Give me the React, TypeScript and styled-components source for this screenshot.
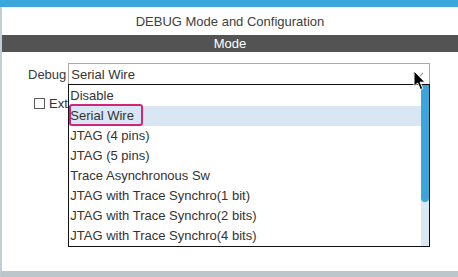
import React, { FC } from 'react';
import styled, { createGlobalStyle } from 'styled-components';

const options: string[] = [
  'Disable',
  'Serial Wire',
  'JTAG (4 pins)',
  'JTAG (5 pins)',
  'Trace Asynchronous Sw',
  'JTAG with Trace Synchro(1 bit)',
  'JTAG with Trace Synchro(2 bits)',
  'JTAG with Trace Synchro(4 bits)',
];

const selected = 'Serial Wire';

const App: FC = () => {
  return (
    <Page>
      <GlobalStyle />
      <TopBar />
      <Frame>
        <Panel>
          <Title>DEBUG Mode and Configuration</Title>
          <SectionBar>Mode</SectionBar>
          <Form>
            <Row>
              <Label>Debug</Label>
              <SelectWrap>
                <SelectBox>
                  {selected}
                  <Chevron width="14" height="10" viewBox="0 0 14 10">
                    <polyline points="1,2 6,7 11,2" fill="none" stroke="#a0a0a0" strokeWidth="1.2" />
                  </Chevron>
                </SelectBox>
                <Dropdown>
                  <List>
                    {options.map((option, index) => (
                      <Item key={index} $active={option === selected}>
                        {option}
                        {option === selected && <Marker />}
                      </Item>
                    ))}
                  </List>
                  <Track>
                    <Thumb />
                  </Track>
                </Dropdown>
                <Cursor width="14" height="21" viewBox="0 0 14 21">
                  <path
                    d="M1 1 L1 16.5 L4.6 13 L7.4 19.6 L9.8 18.6 L7.1 12.2 L12 12.2 Z"
                    fill="#000"
                    stroke="#fff"
                    strokeWidth="1"
                    strokeLinejoin="round"
                  />
                </Cursor>
              </SelectWrap>
            </Row>
            <CheckRow>
              <Check />
              <span>Ext</span>
            </CheckRow>
          </Form>
        </Panel>
      </Frame>
    </Page>
  );
};

export default App;

const GlobalStyle = createGlobalStyle`
  html, body {
    margin: 0;
    padding: 0;
    background: #fff;
  }
  body {
    font-family: "Liberation Sans", Arial, sans-serif;
    font-size: 13px;
    color: #333;
  }
`;

const Page = styled.div`
  width: 458px;
  height: 277px;
  display: flex;
  flex-direction: column;
  overflow: hidden;
`;

const TopBar = styled.div`
  height: 7px;
  background: #3aa7dc;
`;

const Frame = styled.div`
  flex: 1;
  display: flex;
  border-left: 2px solid #c2cdd4;
  border-bottom: 6px solid #bcc6cb;
`;

const Panel = styled.div`
  flex: 1;
  display: flex;
  flex-direction: column;
  background: #fff;
`;

const Title = styled.div`
  height: 28px;
  display: flex;
  align-items: center;
  justify-content: center;
  color: #404040;
`;

const SectionBar = styled.div`
  height: 17px;
  line-height: 17px;
  text-align: center;
  background: #535353;
  color: #fff;
`;

const Form = styled.div`
  padding: 11px 0 0 26px;
  display: flex;
  flex-direction: column;
  gap: 11px;
`;

const Row = styled.div`
  display: flex;
  align-items: center;
  gap: 2px;
`;

const Label = styled.span`
  color: #3a3a3a;
`;

const SelectWrap = styled.div`
  position: relative;
  width: 362px;
  height: 22px;
`;

const SelectBox = styled.div`
  box-sizing: border-box;
  height: 22px;
  border: 1px solid #a9a9a9;
  padding-left: 2px;
  display: flex;
  align-items: center;
  color: #333;
`;

const Chevron = styled.svg`
  position: absolute;
  right: 4px;
  top: 8px;
`;

const Dropdown = styled.div`
  position: absolute;
  z-index: 2;
  top: 21px;
  left: 0;
  width: 362px;
  height: 163px;
  box-sizing: border-box;
  border: 1px solid #111;
  background: #fff;
  display: flex;
`;

const List = styled.div`
  flex: 1;
  padding-top: 1px;
  display: flex;
  flex-direction: column;
`;

const Item = styled.div<{ $active?: boolean }>`
  position: relative;
  height: 20px;
  line-height: 20px;
  padding-left: 1px;
  white-space: nowrap;
  color: #333;
  background: ${({ $active }) => ($active ? '#d9e6f3' : 'transparent')};
`;

const Marker = styled.span`
  position: absolute;
  left: 0;
  top: -2px;
  width: 74px;
  height: 22px;
  box-sizing: border-box;
  border: 2px solid #d3247b;
  border-radius: 3px;
`;

const Track = styled.div`
  width: 8px;
  background: #dbe7f3;
`;

const Thumb = styled.div`
  height: 117px;
  background: #3aa6dc;
  border-radius: 0 0 4px 4px;
`;

const Cursor = styled.svg`
  position: absolute;
  z-index: 3;
  left: 345px;
  top: 7px;
`;

const CheckRow = styled.div`
  display: flex;
  align-items: center;
  gap: 4px;
  padding-left: 6px;
  color: #333;
`;

const Check = styled.span`
  width: 11px;
  height: 11px;
  box-sizing: border-box;
  border: 1px solid #5a5a5a;
  background: #fff;
`;
